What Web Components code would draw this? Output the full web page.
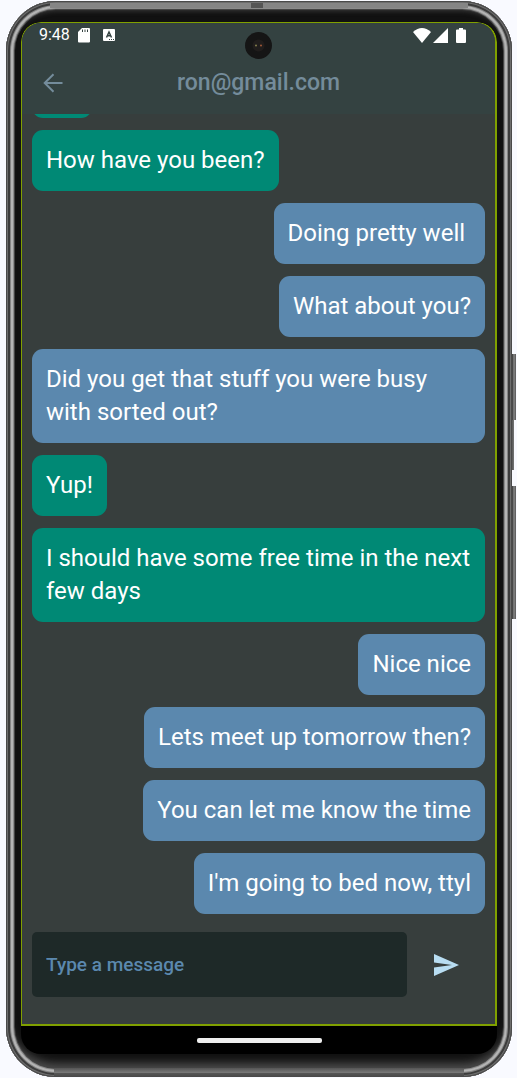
<!DOCTYPE html>
<html lang="en">
<head>
<meta charset="utf-8">
<meta name="viewport" content="width=device-width, initial-scale=1">
<title>Chat</title>
<style>
  html, body { margin: 0; min-height: 100%; }
  body { background: #f9faff; font-family: Roboto, "Liberation Sans", sans-serif; overflow: hidden; }
</style>
</head>
<body>
<phone-frame>
  <status-bar></status-bar>
  <chat-header>ron@gmail.com</chat-header>
  <message-list>
    <chat-message from="them" short></chat-message>
    <chat-message from="them">How have you been?</chat-message>
    <chat-message from="me">Doing pretty well&nbsp;</chat-message>
    <chat-message from="me">What about you?</chat-message>
    <chat-message from="me">Did you get that stuff you were busy with sorted out?</chat-message>
    <chat-message from="them">Yup!</chat-message>
    <chat-message from="them">I should have some free time in the next few days</chat-message>
    <chat-message from="me">Nice nice</chat-message>
    <chat-message from="me">Lets meet up tomorrow then?</chat-message>
    <chat-message from="me">You can let me know the time</chat-message>
    <chat-message from="me">I'm going to bed now, ttyl</chat-message>
  </message-list>
  <message-composer></message-composer>
</phone-frame>

<script>
class BaseElement extends HTMLElement {
  constructor() {
    super();
    this.attachShadow({ mode: 'open' }).innerHTML =
      '<style>*{box-sizing:border-box}' + this.constructor.css + '</style>' + this.constructor.html;
  }
}

customElements.define('phone-frame', class extends BaseElement {
  static css = `
    :host { display: block; padding: 1px 5px 0 6px; }
    .body {
      position: relative; padding: 21px 15px 23px; border-radius: 50px; background: #111;
      box-shadow: inset 0 0 0 1px #4a4a4a, inset 0 0 0 2px #6e6e6e, inset 0 0 0 4px #3c3c3c,
        inset 0 0 0 5px #858585, inset 0 0 0 7px #b4b4b4, inset 0 0 0 8px #8c8c8c, inset 0 0 0 9px #444,
        inset 0 -12px 8px 2px #4c4c4c, inset 0 10px 5px 0 #3a3a3a;
    }
    .body::before { content: ""; position: absolute; top: 2px; left: 44px; right: 44px; height: 5px; background: linear-gradient(90deg, #858585 48%, #555 48%, #555 51%, #858585 51%); }
    .body::after { content: ""; position: absolute; bottom: 0; left: 48px; right: 48px; height: 9px; background: linear-gradient(#555, #707070 40%, #888 45%, #555 60%, #484848); }
    .screen { background: #000; border-radius: 20px; overflow: hidden; }
    .app { display: flex; flex-direction: column; background: #373e3d; border: solid #80a000; border-width: 1px 2px 2px 1px;
      border-top-left-radius: 20px; border-top-right-radius: 20px; overflow: hidden; }
    .nav { height: 28px; display: flex; justify-content: center; align-items: center; }
    .nav i { width: 125px; height: 5px; border-radius: 2px; background: #eee; }
    .camera { position: absolute; top: 31px; left: 50%; width: 27px; height: 27px; margin-left: -14px;
      border-radius: 50%; background: #151515; }
    .camera svg { display: block; }
    .key { position: absolute; left: 100%; width: 4px; background: linear-gradient(90deg, #333, #888 50%, #555); }
    .power { top: 353px; height: 66px; }
    .rim { top: 419px; height: 50px; width: 2px; }
    .volume { top: 485px; height: 133px; }
  `;
  static html = `
    <div class="body">
      <div class="screen">
        <div class="app"><slot></slot></div>
        <div class="nav"><i></i></div>
      </div>
      <div class="camera"><svg width="27" height="27" viewBox="0 0 27 27"><circle cx="13.500" cy="13.500" r="6" fill="#201d1c"/><circle cx="11" cy="13.500" r="1" fill="#85804e"/><circle cx="16" cy="13.500" r="1" fill="#a35a38"/></svg></div>
      <div class="key power"></div><div class="key rim"></div><div class="key volume"></div>
    </div>`;
});

customElements.define('status-bar', class extends BaseElement {
  static css = `
    :host { display: flex; align-items: center; height: 24px; padding: 0 29px 0 17px; background: #344241; color: #fff; }
    time { font-size: 16px; line-height: 24px; width: 39px; }
    svg { display: block; fill: #fff; }
    .a { margin-left: 13px; }
    .wifi { margin-left: auto; }
    .signal { margin-left: 2px; }
    .battery { margin-left: 8px; }
  `;
  static html = `
    <time>9:48</time>
    <svg width="12" height="16" viewBox="0 0 12 16"><path fill-rule="evenodd" d="M4 1h7a1 1 0 0 1 1 1v12.500a1 1 0 0 1-1 1H1a1 1 0 0 1-1-1V5zM4 2.500v2.500h1v-2.500zm2.500 0v2.500h1v-2.500zm2.500 0v2.500h1v-2.500z"/></svg>
    <svg class="a" width="12" height="12" viewBox="0 0 12 12"><rect width="12" height="12" rx="1"/><path d="M3.500 8.500 6 3l2.500 5.500M4.500 6.800h3" fill="none" stroke="#344241" stroke-width="1.500"/><path d="M6 10.500h1m1 0h1m1 0h1" stroke="#344241"/></svg>
    <svg class="wifi" width="18" height="15" viewBox="0 0 18 15"><path d="M0 4Q9-4 18 4L9 15z"/></svg>
    <svg class="signal" width="15" height="15" viewBox="0 0 15 15"><path d="M15 0v15H0z"/></svg>
    <svg class="battery" width="10" height="15" viewBox="0 0 10 15"><path d="M3 0h4v1.500h2a1 1 0 0 1 1 1V14a1 1 0 0 1-1 1H1a1 1 0 0 1-1-1V2.500a1 1 0 0 1 1-1h2z"/></svg>
  `;
});

customElements.define('chat-header', class extends BaseElement {
  static css = `
    :host { display: grid; box-sizing: border-box; grid-template-columns: 40px 1fr 40px; align-items: center; height: 67px;
      padding: 4px 11px 0; background: #344241; color: #748c9b; }
    button { display: flex; justify-content: center; align-items: center; width: 40px; height: 40px; padding: 0; border: 0; background: none; color: inherit; }
    h1 { margin: 0; font-size: 23px; line-height: 32px; font-weight: 500; text-align: center; }
  `;
  static html = `
    <button type="button" aria-label="Back"><svg width="20" height="20" viewBox="0 0 20 20" fill="none" stroke="currentColor" stroke-width="2"><path d="M19.500 10H2M10.500 1.200 1.700 10l8.800 8.800"/></svg></button>
    <h1><slot></slot></h1>`;
});

customElements.define('message-list', class extends BaseElement {
  static css = `
    :host { display: flex; flex-direction: column; justify-content: flex-end; gap: 12px; padding: 0 10px; height: 800px; overflow: hidden; }
  `;
  static html = `<slot></slot>`;
});

customElements.define('chat-message', class extends BaseElement {
  static css = `
    :host { flex: none; align-self: flex-start; padding: 14px; border-radius: 11px; background: #008975; color: #fff;
      font-size: 24px; line-height: 33px; }
    :host([from="me"]) { align-self: flex-end; background: #5b88ae; }
    :host([short]) { width: 32px; height: 33px; }
  `;
  static html = `<slot></slot>`;
});

customElements.define('message-composer', class extends BaseElement {
  static css = `
    :host { display: block; padding: 18px 10px 27px; }
    form { display: flex; align-items: center; margin: 0; }
    input { flex: 1; min-width: 0; height: 65px; padding: 0 14px; border: 0; border-radius: 5px; background: #1e2928;
      color: #fff; font: 500 19px/24px Roboto, "Liberation Sans", sans-serif; }
    input::placeholder { color: #5b88ae; opacity: 1; }
    button { display: flex; justify-content: center; align-items: center; width: 78px; height: 60px; padding: 0; border: 0; background: none; }
  `;
  static html = `
    <form>
      <input type="text" placeholder="Type a message" aria-label="Type a message">
      <button type="button" aria-label="Send"><svg width="25" height="22" viewBox="0 0 25 22" fill="#b8ddf2"><path d="M0 0l25 11L0 22v-8.500L18 11 0 8.500z"/></svg></button>
    </form>`;
});
</script>
</body>
</html>
